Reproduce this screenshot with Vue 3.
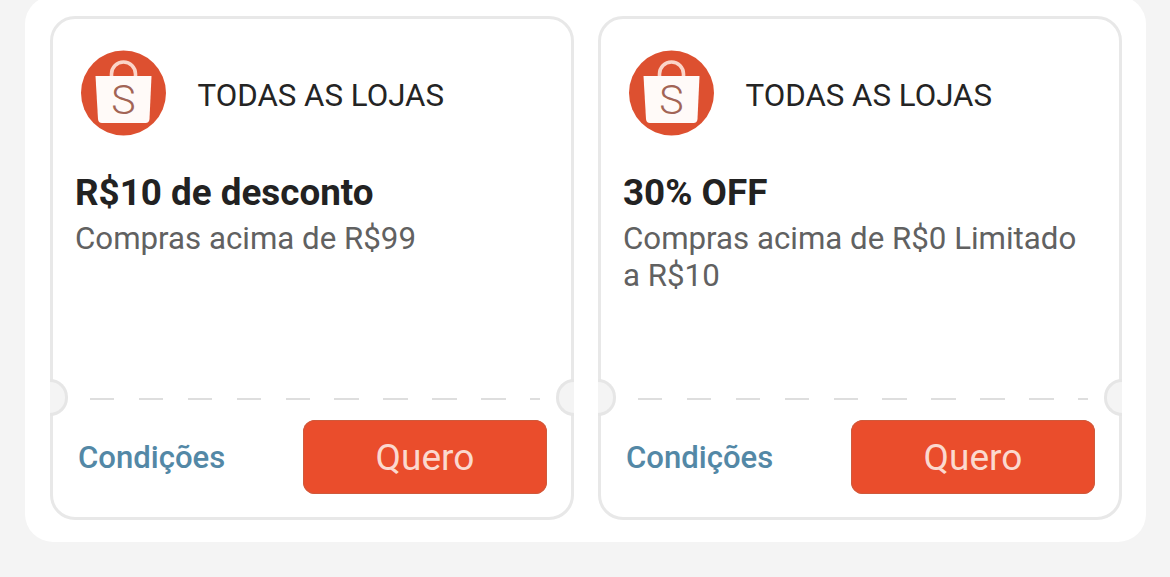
<script setup>
import { ref } from 'vue'

// 优惠券列表
const coupons = ref([
  { id: 1, store: 'TODAS AS LOJAS', title: 'R$10 de desconto', rule: 'Compras acima de R$99' },
  { id: 2, store: 'TODAS AS LOJAS', title: '30% OFF', rule: 'Compras acima de R$0 Limitado a R$10' }
])
</script>

<template>
  <div class="page">
    <div class="panel">
      <div v-for="coupon in coupons" :key="coupon.id" class="coupon">
        <div class="store">
          <svg class="logo" viewBox="0 0 86 86" width="86" height="86">
            <circle cx="42.500" cy="43" r="42.500" fill="#dd5030" />
            <path d="M30.500 27 V24 A12 12 0 0 1 54.500 24 V27" fill="none" stroke="#fbd5c9" stroke-width="3.600" />
            <path d="M14.500 26 H70.500 L68.500 69 Q68.200 73 64.500 73 H21 Q17.300 73 17 69 Z" fill="#fffaf8" />
            <text x="42.500" y="63.500" text-anchor="middle" class="logo-letter">S</text>
          </svg>
          <span class="store-name">{{ coupon.store }}</span>
        </div>

        <div class="info">
          <div class="title">{{ coupon.title }}</div>
          <div class="rule">{{ coupon.rule }}</div>
        </div>

        <!-- 撕裂线 -->
        <div class="tear">
          <span class="notch notch-left"></span>
          <div class="dashes"></div>
          <span class="notch notch-right"></span>
        </div>

        <div class="actions">
          <a class="terms">Condições</a>
          <button class="claim">Quero</button>
        </div>
      </div>
    </div>
  </div>
</template>

<style>
body {
  background: #f4f4f4;
}
</style>

<style scoped>
.page {
  height: 577px;
  padding: 0 24px 0 25px;
  box-sizing: border-box;
  overflow: hidden;
  background: #f4f4f4;
  font-family: Roboto, "Liberation Sans", sans-serif;
}

.panel {
  display: flex;
  gap: 24px;
  height: 546px;
  margin-top: -4px;
  padding: 20px 24px 22px 25px;
  box-sizing: border-box;
  border-radius: 28px;
  background: #fff;
}

.coupon {
  display: flex;
  flex-direction: column;
  width: 524px;
  height: 504px;
  box-sizing: border-box;
  border: 3px solid #e8e8e8;
  border-radius: 25px;
  background: #fff;
}

/* 店铺 */
.store {
  display: flex;
  align-items: center;
  height: 86px;
  padding: 31px 0 0 28px;
}

.logo {
  flex: none;
}

.logo-letter {
  font-family: Roboto, sans-serif;
  font-size: 41px;
  font-weight: 300;
  fill: #a26455;
}

.store-name {
  margin: 6px 0 0 30.5px;
  font-size: 31.25px;
  line-height: 38px;
  color: #242424;
  white-space: nowrap;
}

/* 优惠内容 */
.info {
  flex: 1;
  padding: 35px 34px 0 22px;
}

.title {
  font-size: 36.8px;
  font-weight: 700;
  line-height: 44px;
  color: #222;
}

.rule {
  margin-top: 5px;
  font-size: 31.25px;
  line-height: 37px;
  color: #616161;
}

.tear {
  display: flex;
  align-items: center;
  justify-content: space-between;
  height: 37px;
  margin: 0 -3px;
}

.notch {
  width: 18px;
  height: 37px;
  box-sizing: border-box;
  border: 3px solid #e6e6e6;
  background: #f4f4f4;
}

.notch-left {
  border-left: none;
  border-radius: 0 19px 19px 0;
}

.notch-right {
  border-right: none;
  border-radius: 19px 0 0 19px;
}

.dashes {
  width: 450px;
  height: 2px;
  margin: 3px 0 0 6px;
  background: repeating-linear-gradient(90deg, #dedede 0 24.5px, transparent 24.5px 48.9px);
}

/* 底部操作 */
.actions {
  display: flex;
  align-items: center;
  justify-content: space-between;
  height: 74px;
  padding: 4px 24px 23px 25px;
}

.terms {
  font-size: 31.1px;
  font-weight: 500;
  color: #5388a6;
}

.claim {
  width: 244px;
  height: 74px;
  padding: 0;
  border: none;
  border-radius: 12px;
  background: #ea4d2c;
  box-shadow: inset 0 0 0 1px #cf5a3c;
  color: #fbd9cf;
  font-family: inherit;
  font-size: 37px;
}
</style>
